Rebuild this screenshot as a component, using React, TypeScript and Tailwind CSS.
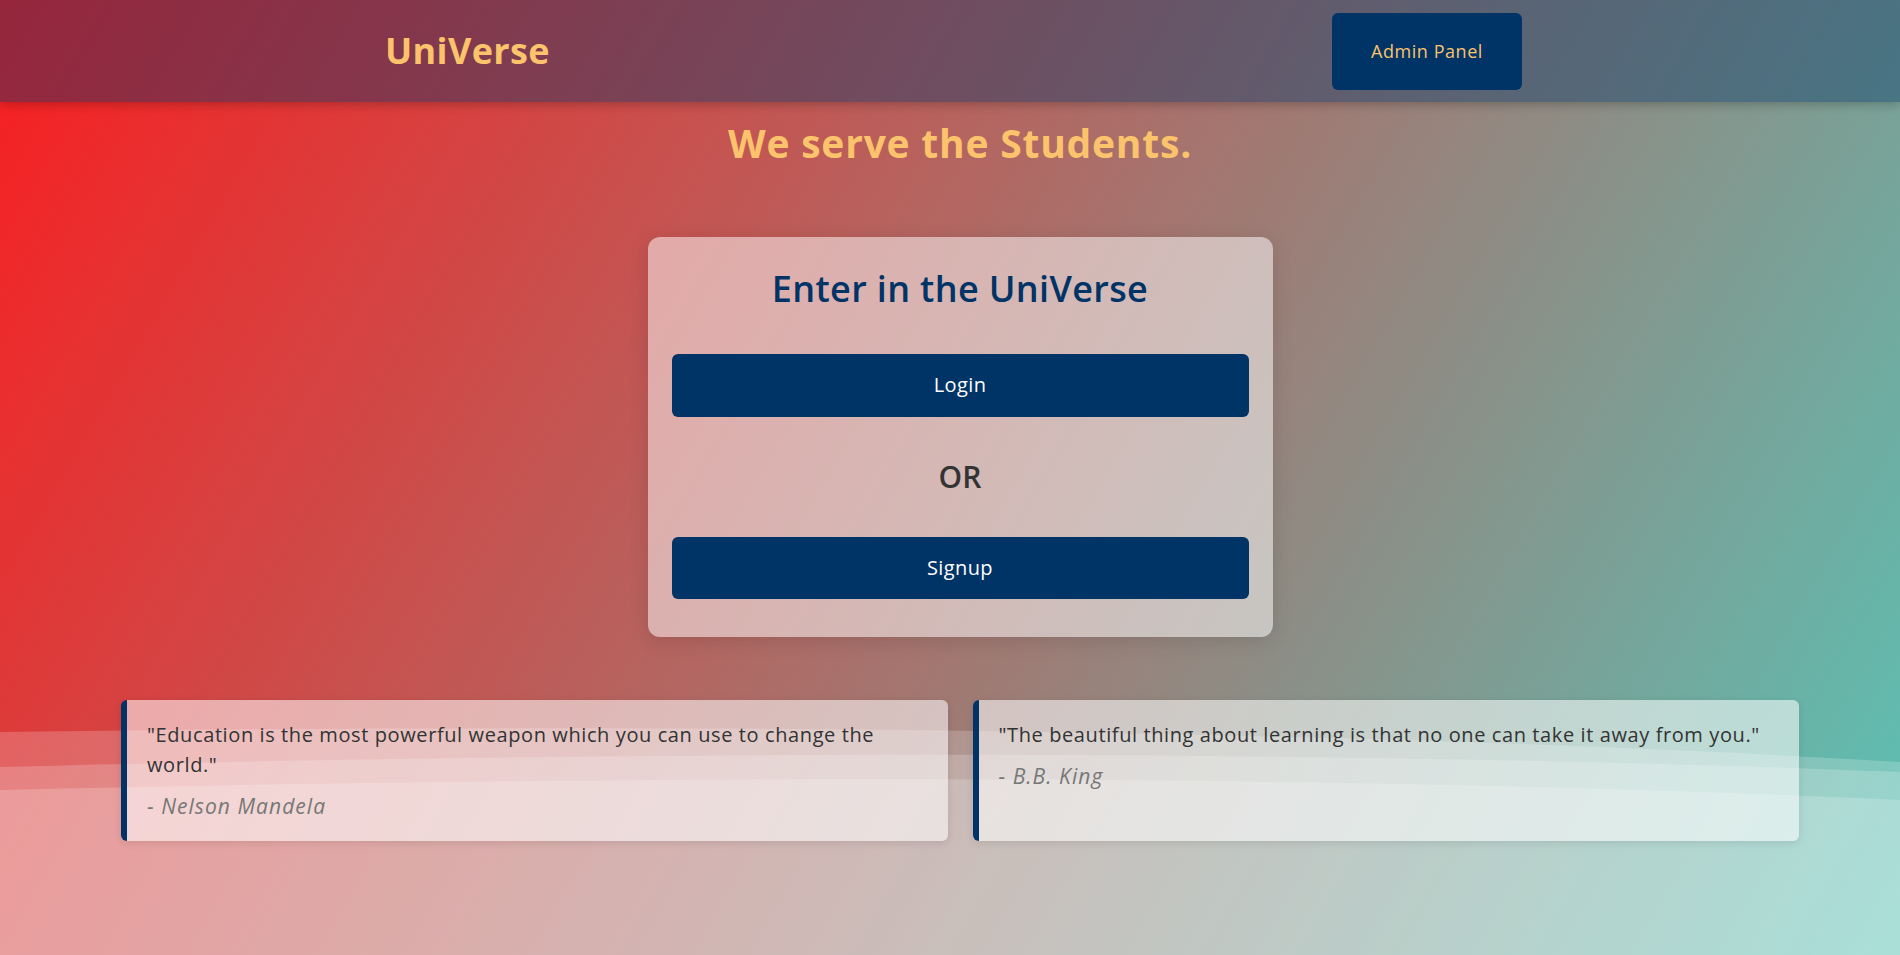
const quotes = [
  {
    text: "\"Education is the most powerful weapon which you can use to change the world.\"",
    author: "- Nelson Mandela",
  },
  {
    text: "\"The beautiful thing about learning is that no one can take it away from you.\"",
    author: "- B.B. King",
  },
]

function Waves() {
  return (
    <svg
      className="pointer-events-none absolute inset-0 h-full w-full"
      viewBox="0 0 1900 955"
      preserveAspectRatio="none"
    >
      <path d="M0 732 C 600 724 1300 726 1900 762 L1900 955 L0 955 Z" fill="rgba(255,255,255,0.2)" />
      <path d="M0 767 C 600 752 1300 748 1900 772 L1900 955 L0 955 Z" fill="rgba(255,255,255,0.2)" />
      <path d="M0 790 C 600 776 1300 772 1900 800 L1900 955 L0 955 Z" fill="rgba(255,255,255,0.2)" />
    </svg>
  )
}

function QuoteCard({ text, author }: { text: string; author: string }) {
  return (
    <div className="rounded-md border-l-[6px] border-[#003366] bg-white/55 px-5 py-5 shadow-[0_2px_8px_rgba(0,0,0,0.1)]">
      <p className="text-[20px] leading-[30px] tracking-[0.03em] text-[#333]">{text}</p>
      <p className="mt-[11px] text-[21px] leading-[30px] tracking-[0.05em] italic text-[#777]">{author}</p>
    </div>
  )
}

export default function App() {
  return (
    <div className="relative min-h-screen overflow-hidden bg-[linear-gradient(120deg,#f91e20_0%,#59c3b6_100%)] font-['Open_Sans',sans-serif]">
      <Waves />

      <header className="relative z-10 flex h-[102px] items-center justify-between bg-[#003366]/40 pr-[378px] pl-[385px] shadow-[0_2px_10px_rgba(0,0,0,0.25)]">
        <span className="text-[36px] font-bold tracking-[0.01em] text-[#fbc36b]">UniVerse</span>
        <button className="h-[77px] w-[190px] rounded-md bg-[#003366] text-[18px] tracking-[0.03em] text-[#fbc36b]">
          Admin Panel
        </button>
      </header>

      <main className="relative z-10 flex flex-col items-center pl-5">
        <h1 className="mt-[18px] text-[39px] leading-[1.2] font-bold tracking-[0.02em] text-[#fbc36b]">
          We serve the Students.
        </h1>

        <div className="mt-[70px] w-[625px] rounded-xl bg-white/50 px-6 pt-[31px] pb-[38px] text-center shadow-[0_4px_20px_rgba(0,0,0,0.12)]">
          <h2 className="text-[36px] leading-[42px] font-semibold tracking-[0.01em] text-[#003366]">
            Enter in the UniVerse
          </h2>
          <button className="mt-[44px] h-[63px] w-full rounded-md bg-[#003366] text-[20px] tracking-[0.02em] text-white">
            Login
          </button>
          <p className="my-[42px] text-[30px] leading-[36px] font-semibold text-[#333]">OR</p>
          <button className="h-[62px] w-full rounded-md bg-[#003366] text-[20px] tracking-[0.02em] text-white">
            Signup
          </button>
        </div>

        <section className="mt-[63px] grid w-full grid-cols-2 gap-[25px] px-[101px]">
          {quotes.map((q) => (
            <QuoteCard key={q.author} text={q.text} author={q.author} />
          ))}
        </section>
      </main>
    </div>
  )
}
